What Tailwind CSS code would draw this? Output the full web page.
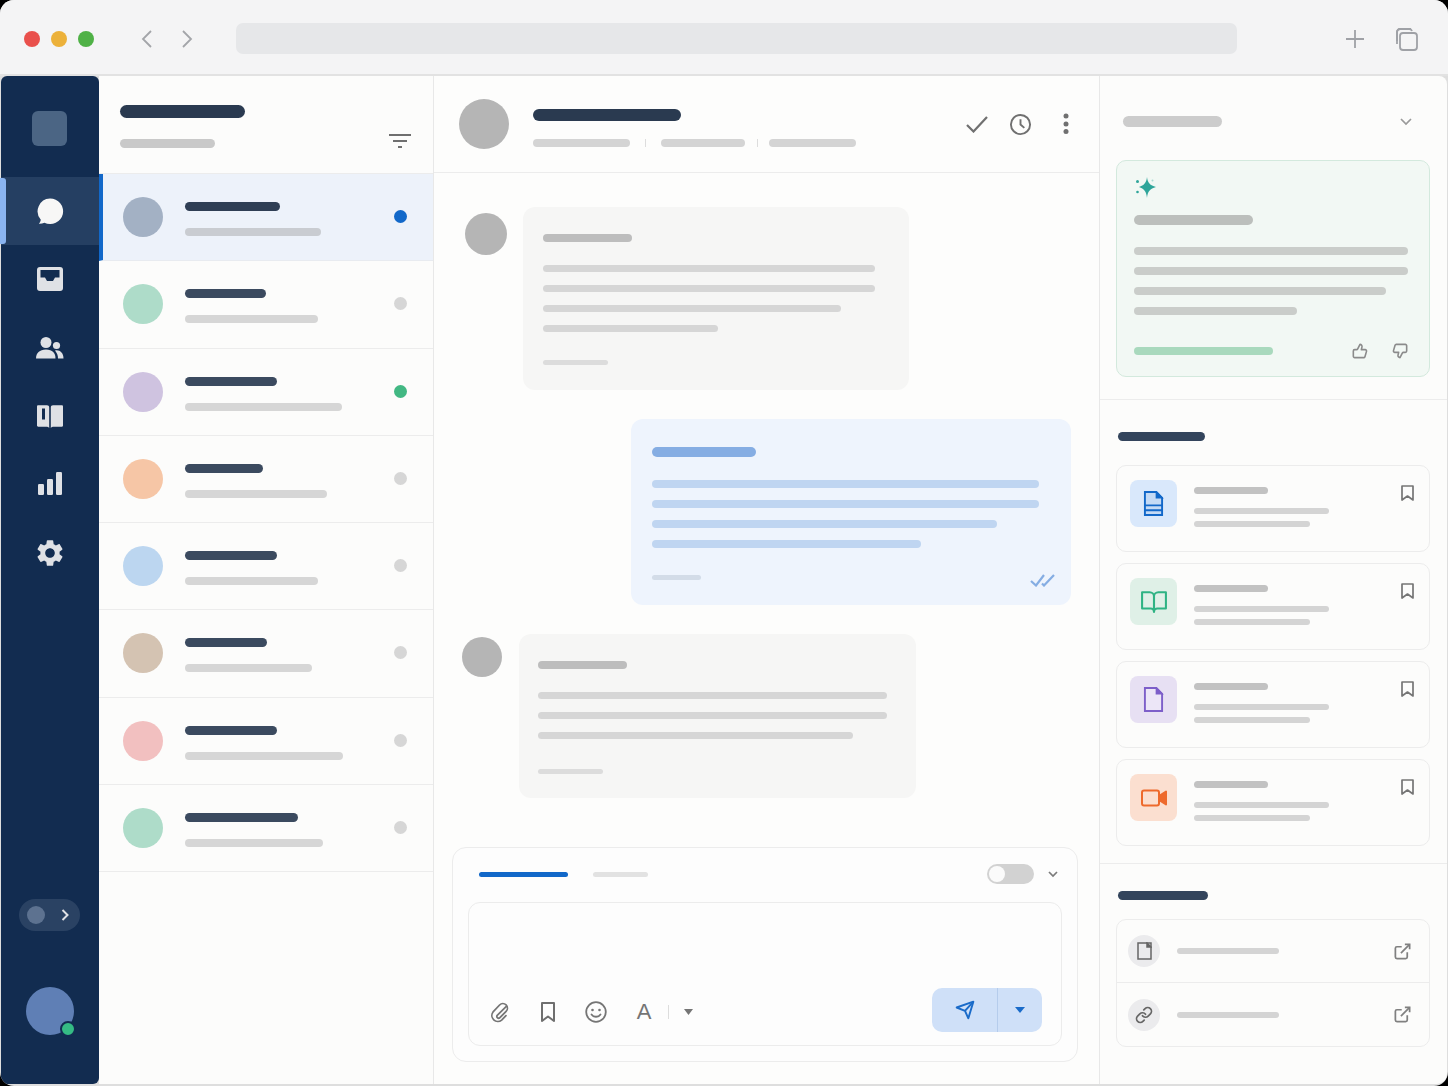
<!DOCTYPE html>
<html lang="en">
<head>
    <meta charset="UTF-8">
    <meta name="viewport" content="width=device-width, initial-scale=1.0">
    <title>Support Inbox</title>
    <script src="https://cdn.jsdelivr.net/npm/@tailwindcss/browser@4"></script>
</head>
<body class="bg-black">
<div class="w-[1448px] h-[1086px] overflow-hidden rounded-[14px] bg-[#dedede] font-['Inter',sans-serif]">

    <!-- Browser bar -->
    <div class="flex h-[76px] items-center border-b-2 border-[#e2e2e2] bg-[#f4f4f5] pl-6 pt-[3px]">
        <div class="flex gap-[11px]">
            <span class="size-4 rounded-full bg-[#e9504c]"></span>
            <span class="size-4 rounded-full bg-[#ecb13a]"></span>
            <span class="size-4 rounded-full bg-[#4fb146]"></span>
        </div>
        <svg class="ml-[46px] h-[18px] w-[14px]" viewBox="0 0 14 18" fill="none" stroke="#a3a5a9" stroke-width="1.8"><path d="M11 1 3 9l8 8"/></svg>
        <svg class="ml-[26px] h-[18px] w-[14px]" viewBox="0 0 14 18" fill="none" stroke="#a3a5a9" stroke-width="1.8"><path d="m3 1 8 8-8 8"/></svg>
        <div class="ml-[42px] h-[31px] w-[1001px] rounded-[7px] bg-[#e6e7e9]"></div>
        <svg class="ml-[108px] size-5" viewBox="0 0 20 20" fill="none" stroke="#9fa1a6" stroke-width="1.8"><path d="M10 1v18M1 10h18"/></svg>
        <svg class="ml-[29px] size-6" viewBox="0 0 24 24" fill="none" stroke="#9fa1a6" stroke-width="1.8"><path d="M3 17V5a3 3 0 0 1 3-3h11"/><path d="M3 14V5a3 3 0 0 1 3-3h9a3 3 0 0 1 3 2"/><rect x="6" y="6" width="17" height="17" rx="3"/></svg>
    </div>

    <div class="flex h-[1008px] pl-px pr-px">

        <!-- Nav rail -->
        <nav class="relative flex w-[98px] flex-col items-center rounded-t-[6px] rounded-b-[6px] bg-[#122c50]">
            <div class="mr-[2px] mt-[35px] size-[35px] rounded-[6px] bg-[#4b6584]"></div>
            <div class="mt-[31px] flex h-[68px] w-full items-center justify-center bg-[#253f62]">
                <svg class="size-7" viewBox="0 0 28 28" fill="#f7f7f6"><path d="M14 1.500a13 12.800 0 1 1-5.600 24.300c-1.700.7-3.700 1-5.600 .9 1-1 1.800-2.500 2-4A12.800 12.800 0 0 1 14 1.500Z"/></svg>
            </div>
            <span class="absolute left-[-1px] top-[102px] h-[66px] w-[6px] rounded-r-[3px] bg-[#8ab4f0]"></span>
            <div class="flex h-[68.400px] w-full items-center justify-center">
                <svg class="size-[26px]" viewBox="0 0 26 26"><rect x="0" y="1" width="26" height="24" rx="3" fill="#dfe1e5"/><path d="M3.500 4h19v7.500H18L16 15h-6l-2-3.500H3.500Z" fill="#122c50"/></svg>
            </div>
            <div class="flex h-[68.400px] w-full items-center justify-center">
                <svg class="size-7" viewBox="0 0 28 28" fill="#dfe1e5"><circle cx="10" cy="8.500" r="5.500"/><path d="M0 24.500c0-5.500 3.500-9 10-9s9.500 3.500 9.500 9Z"/><circle cx="20.500" cy="11.500" r="3.600"/><path d="M19 16.500c4.500-1 8.500 2 8.500 8h-5.500c0-3-1-5.500-3-8Z"/></svg>
            </div>
            <div class="flex h-[68.400px] w-full items-center justify-center">
                <svg class="size-7" viewBox="0 0 28 28"><path d="M1 4.500c0-.8.5-1.200 1.200-1.200H11c1.300 0 2.200.9 2.200 2.200V26c-.6-.8-1.400-1.200-2.300-1.200H2.200C1.500 24.800 1 24.400 1 23.600Z" fill="#dfe1e5"/><path d="M27 4.500c0-.8-.5-1.200-1.200-1.200H17c-1.300 0-2.200.9-2.200 2.200V26c.6-.8 1.400-1.200 2.300-1.200h8.700c.7 0 1.200-.4 1.200-1.200Z" fill="#dfe1e5"/><rect x="6" y="6.500" width="3" height="11" fill="#122c50"/></svg>
            </div>
            <div class="flex h-[68.400px] w-full items-center justify-center">
                <svg class="size-7" viewBox="0 0 28 28" fill="#dfe1e5"><rect x="2" y="14" width="6" height="11" rx="1.200"/><rect x="11" y="9" width="6" height="16" rx="1.200"/><rect x="20" y="2" width="6" height="23" rx="1.200"/></svg>
            </div>
            <div class="flex h-[68.400px] w-full items-center justify-center">
                <svg class="size-[32px]" viewBox="0 0 24 24" fill="#dfe1e5"><path d="M19.140 12.940c.04-.3.06-.61.06-.94 0-.32-.02-.64-.07-.94l2.030-1.580c.18-.14.23-.41.12-.61l-1.920-3.320c-.12-.22-.37-.29-.59-.22l-2.390.96c-.5-.38-1.030-.7-1.620-.94l-.36-2.540c-.04-.24-.24-.41-.48-.41h-3.840c-.24 0-.43.17-.47.41l-.36 2.540c-.59.24-1.130.57-1.620.94l-2.390-.96c-.22-.08-.47 0-.59.22L2.740 8.870c-.12.21-.08.47.12.61l2.030 1.580c-.05.3-.09.63-.09.94s.02.64.07.94l-2.030 1.580c-.18.14-.23.41-.12.61l1.920 3.320c.12.22.37.29.59.22l2.390-.96c.5.38 1.030.7 1.620.94l.36 2.540c.05.24.24.41.48.41h3.840c.24 0 .44-.17.47-.41l.36-2.540c.59-.24 1.130-.56 1.620-.94l2.390.96c.22.08.47 0 .59-.22l1.920-3.320c.12-.22.07-.47-.12-.61l-2.010-1.580zM12 15.600c-1.980 0-3.600-1.620-3.600-3.600s1.620-3.600 3.600-3.600 3.600 1.620 3.600 3.600-1.620 3.600-3.600 3.600z"/></svg>
            </div>
            <div class="mr-[2px] mt-auto flex h-8 w-[61px] items-center justify-between rounded-full bg-[#2a4263] pl-2 pr-[11px]">
                <span class="size-[18px] rounded-full bg-[#5d7290]"></span>
                <svg class="h-3 w-2" viewBox="0 0 8 12" fill="none" stroke="#dfe1e5" stroke-width="2"><path d="m1.500 1 5 5-5 5"/></svg>
            </div>
            <div class="relative mb-[49px] mt-[56px] size-12 rounded-full bg-[#5f7fb5]">
                <span class="absolute bottom-[-2px] right-[-2px] size-[16px] rounded-full border-[2px] border-[#122c50] bg-[#35bb84]"></span>
            </div>
        </nav>

        <!-- Conversation list -->
        <section class="flex w-[335px] flex-col border-r border-[#e8e8e8] bg-[#fcfcfb]">
            <div class="flex h-[98px] shrink-0 items-end justify-between border-b border-[#ececec] pl-[21px] pr-[22px]">
                <div class="self-start pt-[29px]">
                    <div class="h-[13px] w-[125px] rounded-full bg-[#2a3a50]"></div>
                    <div class="mt-[21px] h-[9px] w-[95px] rounded-full bg-[#c9c9c9]"></div>
                </div>
                <svg class="mb-[24px] h-4 w-[22px]" viewBox="0 0 22 16" fill="none" stroke="#6f6f6f" stroke-width="1.800"><path d="M0 2h22M4 8h14M9 14h4"/></svg>
            </div>

            <div class="flex h-[87.300px] items-start border-b border-l-4 border-b-[#e8ebf0] border-l-[#1268c9] bg-[#edf2fa] pl-5 pr-[26px] pt-[23px]">
                <span class="size-10 shrink-0 rounded-full bg-[#a3b1c4]"></span>
                <div class="ml-[22px] flex-1 pt-[5px]"><div class="h-[9px] w-[95px] rounded-full bg-[#2f3e54]"></div><div class="mt-[17px] h-2 w-[136px] rounded-full bg-[#c9ccd1]"></div></div>
                <span class="mt-[13px] size-[13px] rounded-full bg-[#1268c9]"></span>
            </div>
            <div class="flex h-[87.300px] items-start border-b border-[#ececec] pl-6 pr-[26px] pt-[23px]">
                <span class="size-10 shrink-0 rounded-full bg-[#aedcc9]"></span>
                <div class="ml-[22px] flex-1 pt-[5px]"><div class="h-[9px] w-[81px] rounded-full bg-[#3b4a5f]"></div><div class="mt-[17px] h-2 w-[133px] rounded-full bg-[#d6d6d6]"></div></div>
                <span class="mt-[13px] size-[13px] rounded-full bg-[#d6d6d6]"></span>
            </div>
            <div class="flex h-[87.300px] items-start border-b border-[#ececec] pl-6 pr-[26px] pt-[23px]">
                <span class="size-10 shrink-0 rounded-full bg-[#cfc3e0]"></span>
                <div class="ml-[22px] flex-1 pt-[5px]"><div class="h-[9px] w-[92px] rounded-full bg-[#3b4a5f]"></div><div class="mt-[17px] h-2 w-[157px] rounded-full bg-[#d6d6d6]"></div></div>
                <span class="mt-[13px] size-[13px] rounded-full bg-[#42b883]"></span>
            </div>
            <div class="flex h-[87.300px] items-start border-b border-[#ececec] pl-6 pr-[26px] pt-[23px]">
                <span class="size-10 shrink-0 rounded-full bg-[#f6c6a6]"></span>
                <div class="ml-[22px] flex-1 pt-[5px]"><div class="h-[9px] w-[78px] rounded-full bg-[#3b4a5f]"></div><div class="mt-[17px] h-2 w-[142px] rounded-full bg-[#d6d6d6]"></div></div>
                <span class="mt-[13px] size-[13px] rounded-full bg-[#d6d6d6]"></span>
            </div>
            <div class="flex h-[87.300px] items-start border-b border-[#ececec] pl-6 pr-[26px] pt-[23px]">
                <span class="size-10 shrink-0 rounded-full bg-[#bcd6f0]"></span>
                <div class="ml-[22px] flex-1 pt-[5px]"><div class="h-[9px] w-[92px] rounded-full bg-[#3b4a5f]"></div><div class="mt-[17px] h-2 w-[133px] rounded-full bg-[#d6d6d6]"></div></div>
                <span class="mt-[13px] size-[13px] rounded-full bg-[#d6d6d6]"></span>
            </div>
            <div class="flex h-[87.300px] items-start border-b border-[#ececec] pl-6 pr-[26px] pt-[23px]">
                <span class="size-10 shrink-0 rounded-full bg-[#d4c3b2]"></span>
                <div class="ml-[22px] flex-1 pt-[5px]"><div class="h-[9px] w-[82px] rounded-full bg-[#3b4a5f]"></div><div class="mt-[17px] h-2 w-[127px] rounded-full bg-[#d6d6d6]"></div></div>
                <span class="mt-[13px] size-[13px] rounded-full bg-[#d6d6d6]"></span>
            </div>
            <div class="flex h-[87.300px] items-start border-b border-[#ececec] pl-6 pr-[26px] pt-[23px]">
                <span class="size-10 shrink-0 rounded-full bg-[#f2c0c0]"></span>
                <div class="ml-[22px] flex-1 pt-[5px]"><div class="h-[9px] w-[92px] rounded-full bg-[#3b4a5f]"></div><div class="mt-[17px] h-2 w-[158px] rounded-full bg-[#d6d6d6]"></div></div>
                <span class="mt-[13px] size-[13px] rounded-full bg-[#d6d6d6]"></span>
            </div>
            <div class="flex h-[87.300px] items-start border-b border-[#ececec] pl-6 pr-[26px] pt-[23px]">
                <span class="size-10 shrink-0 rounded-full bg-[#aedcc9]"></span>
                <div class="ml-[22px] flex-1 pt-[5px]"><div class="h-[9px] w-[113px] rounded-full bg-[#3b4a5f]"></div><div class="mt-[17px] h-2 w-[138px] rounded-full bg-[#d6d6d6]"></div></div>
                <span class="mt-[13px] size-[13px] rounded-full bg-[#d6d6d6]"></span>
            </div>
        </section>

        <!-- Chat -->
        <main class="flex w-[666px] flex-col border-r border-[#e8e8e8] bg-[#fdfdfc]">
            <header class="flex h-[97px] shrink-0 items-center border-b border-[#ececec] pl-[25px] pr-[30px]">
                <span class="size-[50px] rounded-full bg-[#b5b5b5]"></span>
                <div class="ml-[24px] flex-1 pt-[7px]">
                    <div class="h-3 w-[148px] rounded-full bg-[#2a3a50]"></div>
                    <div class="mt-[18px] flex items-center">
                        <div class="h-2 w-[97px] rounded-full bg-[#d4d4d4]"></div>
                        <div class="ml-[15px] h-2 w-px bg-[#dddddd]"></div>
                        <div class="ml-[15px] h-2 w-[84px] rounded-full bg-[#d4d4d4]"></div>
                        <div class="ml-[12px] h-2 w-px bg-[#dddddd]"></div>
                        <div class="ml-[11px] h-2 w-[87px] rounded-full bg-[#d4d4d4]"></div>
                    </div>
                </div>
                <svg class="h-[18px] w-[22px]" viewBox="0 0 22 18" fill="none" stroke="#707070" stroke-width="2.200"><path d="m1 10 6.500 6.500L21 2"/></svg>
                <svg class="ml-[21px] size-[23px]" viewBox="0 0 24 24" fill="none" stroke="#707070" stroke-width="2"><circle cx="12" cy="12" r="10"/><path d="M12 6.500V12l4 3.500"/></svg>
                <svg class="ml-[31px] h-[22px] w-[6px]" viewBox="0 0 6 22" fill="#707070"><circle cx="3" cy="3" r="2.500"/><circle cx="3" cy="11" r="2.500"/><circle cx="3" cy="18.500" r="2.500"/></svg>
            </header>

            <div class="flex flex-1 flex-col pt-[34px]">
                <div class="flex items-start pl-[31px]">
                    <span class="mt-[6px] size-[42px] rounded-full bg-[#b5b5b5]"></span>
                    <div class="ml-[16px] h-[183px] w-[386px] rounded-[12px] bg-[#f6f6f5] pl-5 pt-[27px]">
                        <div class="h-2 w-[89px] rounded-full bg-[#bdbdbd]"></div>
                        <div class="mt-[23px] flex flex-col gap-[13px]">
                            <div class="h-[7px] w-[332px] rounded-full bg-[#d6d6d6]"></div>
                            <div class="h-[7px] w-[332px] rounded-full bg-[#d6d6d6]"></div>
                            <div class="h-[7px] w-[298px] rounded-full bg-[#d6d6d6]"></div>
                            <div class="h-[7px] w-[175px] rounded-full bg-[#d6d6d6]"></div>
                        </div>
                        <div class="mt-[28px] h-[5px] w-[65px] rounded-full bg-[#dcdcdc]"></div>
                    </div>
                </div>

                <div class="mr-[28px] mt-[29px] h-[186px] w-[440px] self-end rounded-[12px] bg-[#eef4fd] pl-[21px] pt-[28px]">
                    <div class="h-[10px] w-[104px] rounded-full bg-[#85ade3]"></div>
                    <div class="mt-[23px] flex flex-col gap-3">
                        <div class="h-2 w-[387px] rounded-full bg-[#bfd5f1]"></div>
                        <div class="h-2 w-[387px] rounded-full bg-[#bfd5f1]"></div>
                        <div class="h-2 w-[345px] rounded-full bg-[#bfd5f1]"></div>
                        <div class="h-2 w-[269px] rounded-full bg-[#bfd5f1]"></div>
                    </div>
                    <div class="mt-[27px] flex items-start justify-between pr-[16px]">
                        <div class="h-[5px] w-[49px] rounded-full bg-[#d3dce8]"></div>
                        <svg class="mt-[-2px] h-[14px] w-[25px]" viewBox="0 0 25 14" fill="none" stroke="#85ade3" stroke-width="2.200"><path d="m1 8 5 4.500L14 2"/><path d="m12 10.500 2 2L24 2"/></svg>
                    </div>
                </div>

                <div class="mt-[29px] flex items-start pl-[28px]">
                    <span class="mt-[3px] size-10 rounded-full bg-[#b5b5b5]"></span>
                    <div class="ml-[17px] h-[164px] w-[397px] rounded-[12px] bg-[#f6f6f5] pl-[19px] pt-[27px]">
                        <div class="h-2 w-[89px] rounded-full bg-[#bdbdbd]"></div>
                        <div class="mt-[23px] flex flex-col gap-[13px]">
                            <div class="h-[7px] w-[349px] rounded-full bg-[#d6d6d6]"></div>
                            <div class="h-[7px] w-[349px] rounded-full bg-[#d6d6d6]"></div>
                            <div class="h-[7px] w-[315px] rounded-full bg-[#d6d6d6]"></div>
                        </div>
                        <div class="mt-[30px] h-[5px] w-[65px] rounded-full bg-[#dcdcdc]"></div>
                    </div>
                </div>

                <!-- Composer -->
                <div class="mb-[22px] ml-[18px] mr-[21px] mt-auto h-[215px] rounded-[14px] border border-[#ececec] bg-[#fdfdfd]">
                    <div class="mt-[16px] flex h-5 items-center pl-[26px] pr-[19px]">
                        <div class="h-[5px] w-[89px] rounded-full bg-[#1268c9]"></div>
                        <div class="ml-[25px] h-[5px] w-[55px] rounded-full bg-[#e2e2e2]"></div>
                        <div class="ml-auto flex h-5 w-[47px] items-center rounded-full bg-[#d2d2d2] pl-[2px]">
                            <span class="size-4 rounded-full bg-[#fbfbfb]"></span>
                        </div>
                        <svg class="ml-[14px] h-[7px] w-[10px]" viewBox="0 0 10 7" fill="none" stroke="#7b7b7b" stroke-width="1.700"><path d="m1 1 4 4 4-4"/></svg>
                    </div>
                    <div class="mx-[15px] mt-[18px] flex h-[144px] items-end rounded-[12px] border border-[#ececec] pb-[13px] pl-[7px] pr-[19px]">
                        <div class="flex h-[44px] flex-1 items-center pt-[4px]">
                            <div class="flex w-[48px] justify-center">
                                <svg class="size-[22px]" viewBox="0 0 24 24" fill="none" stroke="#757575" stroke-width="1.900" stroke-linecap="round" stroke-linejoin="round"><path d="m18 5-8.500 11a2 2 0 0 0 3 2.500l6-8a5 5 0 0 0-8-6l-6 8.500a6.500 6.500 0 0 0 10.500 7.500l4-5.500" transform="rotate(8 12 12)"/></svg>
                            </div>
                            <div class="flex w-[48px] justify-center">
                                <svg class="h-5 w-[16px]" viewBox="0 0 16 20" fill="none" stroke="#6f6f6f" stroke-width="2" stroke-linejoin="round"><path d="M2 1h12v18l-6-4.500L2 19Z"/></svg>
                            </div>
                            <div class="flex w-[48px] justify-center">
                                <svg class="size-[22px]" viewBox="0 0 22 22" fill="none" stroke="#757575" stroke-width="1.800"><circle cx="11" cy="11" r="9.800"/><circle cx="7.500" cy="9" r="1.300" fill="#757575" stroke="none"/><circle cx="14.500" cy="9" r="1.300" fill="#757575" stroke="none"/><path d="M6.500 13.500c2 3 7 3 9 0" stroke-linecap="round"/></svg>
                            </div>
                            <span class="flex w-[48px] justify-center font-['Liberation_Sans',sans-serif] text-[22px] leading-none text-[#757575]">A</span>
                            <span class="h-[14px] w-px bg-[#dddddd]"></span>
                            <svg class="ml-[15px] h-[6px] w-[9px]" viewBox="0 0 9 6" fill="#757575"><path d="M0 0h9L4.500 6Z"/></svg>
                        </div>
                        <div class="flex h-[44px] w-[110px] items-center rounded-[10px] bg-[#cfe0f8]">
                            <div class="flex h-full w-[66px] items-center justify-center border-r border-[#b5ccec]">
                                <svg class="size-[20px]" viewBox="0 0 24 24" fill="none" stroke="#1a6bc9" stroke-width="2.300" stroke-linejoin="round"><path d="m22 2-6 20-4-9-10-4Z"/><path d="M22 2 12 13"/></svg>
                            </div>
                            <svg class="ml-[17px] h-[6px] w-[10px]" viewBox="0 0 10 6" fill="#1a6bc9"><path d="M0 0h10L5 6Z"/></svg>
                        </div>
                    </div>
                </div>
            </div>
        </main>

        <!-- Right panel -->
        <aside class="flex flex-1 flex-col rounded-tr-[8px] rounded-br-[10px] bg-[#fcfcfb]">
            <div class="h-[324px] shrink-0 border-b border-[#ececec] px-4">
                <div class="flex items-center justify-between pl-[7px] pr-[19px] pt-[40px]">
                    <div class="h-[11px] w-[99px] rounded-full bg-[#cccccc]"></div>
                    <svg class="h-[8px] w-[12px]" viewBox="0 0 12 8" fill="none" stroke="#9a9a9a" stroke-width="1.700"><path d="m1 1 5 5 5-5"/></svg>
                </div>
                <div class="mt-[33px] h-[217px] w-[314px] rounded-[10px] border border-[#d3e9dd] bg-[#f2f8f4] pl-[17px] pt-[16px]">
                    <svg class="ml-[1px] size-[22px]" viewBox="0 0 22 22" fill="#2ea59a"><path d="M12 0c.6 5.500 3 8.500 9 10-6 1.500-8.400 4.500-9 11-.6-6.500-3-9.500-8-11 5-1.500 7.400-4.500 8-10Z"/><circle cx="2.500" cy="4.500" r="1.500"/><circle cx="2.500" cy="15" r="1.300"/><circle cx="17.500" cy="3.500" r="1" fill="#a9dcd4"/></svg>
                    <div class="mt-[16px] h-[10px] w-[119px] rounded-full bg-[#bcbfbc]"></div>
                    <div class="mt-[22px] flex flex-col gap-3">
                        <div class="h-2 w-[274px] rounded-full bg-[#cacdca]"></div>
                        <div class="h-2 w-[274px] rounded-full bg-[#cacdca]"></div>
                        <div class="h-2 w-[252px] rounded-full bg-[#cacdca]"></div>
                        <div class="h-2 w-[163px] rounded-full bg-[#cacdca]"></div>
                    </div>
                    <div class="mt-[28px] flex items-center pr-[21px]">
                        <div class="h-2 w-[139px] rounded-full bg-[#a9d9bd]"></div>
                        <svg class="ml-auto size-[16px]" viewBox="0 0 24 24" fill="none" stroke="#8b8b8b" stroke-width="2.400" stroke-linejoin="round"><path d="M15 5.880 14 10h5.830a2 2 0 0 1 1.920 2.560l-2.330 8A2 2 0 0 1 17.500 22H4a2 2 0 0 1-2-2v-8a2 2 0 0 1 2-2h2.760a2 2 0 0 0 1.790-1.110L12 2a3.130 3.130 0 0 1 3 3.880Z"/></svg>
                        <svg class="ml-[24px] size-[16px] rotate-180" viewBox="0 0 24 24" fill="none" stroke="#8b8b8b" stroke-width="2.400" stroke-linejoin="round"><path d="M15 5.880 14 10h5.830a2 2 0 0 1 1.920 2.560l-2.330 8A2 2 0 0 1 17.500 22H4a2 2 0 0 1-2-2v-8a2 2 0 0 1 2-2h2.760a2 2 0 0 0 1.790-1.110L12 2a3.130 3.130 0 0 1 3 3.880Z"/></svg>
                    </div>
                </div>
            </div>

            <div class="h-[464px] shrink-0 border-b border-[#ececec] px-4 pt-[32px]">
                <div class="ml-[2px] h-[9px] w-[87px] rounded-full bg-[#33445c]"></div>
                <div class="mt-[24px] flex flex-col gap-[11.600px]">
                    <div class="flex h-[86.500px] w-[314px] items-start rounded-[10px] border border-[#ececec] pl-[13px] pr-[15px] pt-[14px]">
                        <div class="flex size-[47px] shrink-0 items-center justify-center rounded-[8px] bg-[#d9e8fb]">
                            <svg class="h-[25px] w-[21px]" viewBox="0 0 22 26"><path d="M2 1h12l6 6v18H2Z" fill="#c4daf5" stroke="#1268c9" stroke-width="2"/><path d="M14 1v6h6Z" fill="#1268c9" stroke="#1268c9" stroke-width="1.500"/><path d="M2 15h18M2 20h18" stroke="#1268c9" stroke-width="2"/></svg>
                        </div>
                        <div class="ml-[17px] flex-1 pt-[7px]"><div class="h-[7px] w-[74px] rounded-full bg-[#c2c2c2]"></div><div class="mt-[14px] h-[6px] w-[135px] rounded-full bg-[#d4d4d4]"></div><div class="mt-[7px] h-[6px] w-[116px] rounded-full bg-[#d4d4d4]"></div></div>
                        <svg class="mt-[5px] h-4 w-[13px]" viewBox="0 0 13 16" fill="none" stroke="#757575" stroke-width="1.700" stroke-linejoin="round"><path d="M1 1h11v14l-5.500-4L1 15Z"/></svg>
                    </div>
                    <div class="flex h-[86.500px] w-[314px] items-start rounded-[10px] border border-[#ececec] pl-[13px] pr-[15px] pt-[14px]">
                        <div class="flex size-[47px] shrink-0 items-center justify-center rounded-[8px] bg-[#dff0e7]">
                            <svg class="size-[26px]" viewBox="0 0 24 24" fill="none" stroke="#2fb384" stroke-width="1.900" stroke-linejoin="round"><path d="M1 3h7a4 4 0 0 1 4 4v14a3 3 0 0 0-3-3H1z"/><path d="M23 3h-7a4 4 0 0 0-4 4v14a3 3 0 0 1 3-3h8z"/></svg>
                        </div>
                        <div class="ml-[17px] flex-1 pt-[7px]"><div class="h-[7px] w-[74px] rounded-full bg-[#c2c2c2]"></div><div class="mt-[14px] h-[6px] w-[135px] rounded-full bg-[#d4d4d4]"></div><div class="mt-[7px] h-[6px] w-[116px] rounded-full bg-[#d4d4d4]"></div></div>
                        <svg class="mt-[5px] h-4 w-[13px]" viewBox="0 0 13 16" fill="none" stroke="#757575" stroke-width="1.700" stroke-linejoin="round"><path d="M1 1h11v14l-5.500-4L1 15Z"/></svg>
                    </div>
                    <div class="flex h-[86.500px] w-[314px] items-start rounded-[10px] border border-[#ececec] pl-[13px] pr-[15px] pt-[14px]">
                        <div class="flex size-[47px] shrink-0 items-center justify-center rounded-[8px] bg-[#e7e0f3]">
                            <svg class="h-[25px] w-[21px]" viewBox="0 0 22 26"><path d="M2 1h12l6 6v18H2Z" fill="#ece6f7" stroke="#7d5fc9" stroke-width="2"/><path d="M14 1v6h6Z" fill="#7d5fc9" stroke="#7d5fc9" stroke-width="1.500"/></svg>
                        </div>
                        <div class="ml-[17px] flex-1 pt-[7px]"><div class="h-[7px] w-[74px] rounded-full bg-[#c2c2c2]"></div><div class="mt-[14px] h-[6px] w-[135px] rounded-full bg-[#d4d4d4]"></div><div class="mt-[7px] h-[6px] w-[116px] rounded-full bg-[#d4d4d4]"></div></div>
                        <svg class="mt-[5px] h-4 w-[13px]" viewBox="0 0 13 16" fill="none" stroke="#757575" stroke-width="1.700" stroke-linejoin="round"><path d="M1 1h11v14l-5.500-4L1 15Z"/></svg>
                    </div>
                    <div class="flex h-[86.500px] w-[314px] items-start rounded-[10px] border border-[#ececec] pl-[13px] pr-[15px] pt-[14px]">
                        <div class="flex size-[47px] shrink-0 items-center justify-center rounded-[8px] bg-[#fbdfd0]">
                            <svg class="h-[18px] w-[26px]" viewBox="0 0 26 18" fill="none" stroke="#ee6a2c" stroke-width="2" stroke-linejoin="round"><rect x="1" y="1.500" width="17" height="15" rx="2"/><path d="m18 7 7-4.500v13L18 11" fill="#ee6a2c"/></svg>
                        </div>
                        <div class="ml-[17px] flex-1 pt-[7px]"><div class="h-[7px] w-[74px] rounded-full bg-[#c2c2c2]"></div><div class="mt-[14px] h-[6px] w-[135px] rounded-full bg-[#d4d4d4]"></div><div class="mt-[7px] h-[6px] w-[116px] rounded-full bg-[#d4d4d4]"></div></div>
                        <svg class="mt-[5px] h-4 w-[13px]" viewBox="0 0 13 16" fill="none" stroke="#757575" stroke-width="1.700" stroke-linejoin="round"><path d="M1 1h11v14l-5.500-4L1 15Z"/></svg>
                    </div>
                </div>
            </div>

            <div class="px-4 pt-[27px]">
                <div class="ml-[2px] h-[9px] w-[90px] rounded-full bg-[#33445c]"></div>
                <div class="mt-[19px] w-[314px] rounded-[10px] border border-[#ececec]">
                    <div class="flex h-[63px] items-center border-b border-[#ececec] pl-[11px] pr-[17px]">
                        <span class="flex size-8 items-center justify-center rounded-full bg-[#ebebed]">
                            <svg class="h-[18px] w-[15px]" viewBox="0 0 15 18" fill="none" stroke="#666666" stroke-width="1.500"><path d="M1 1h13v16H1Z"/><path d="M10 1v4h4Z" fill="#666666"/></svg>
                        </span>
                        <div class="ml-[17px] h-[6px] w-[102px] rounded-full bg-[#d4d4d4]"></div>
                        <svg class="ml-auto size-[19px]" viewBox="0 0 24 24" fill="none" stroke="#808080" stroke-width="2.200"><path d="M18 13v6a2 2 0 0 1-2 2H5a2 2 0 0 1-2-2V8a2 2 0 0 1 2-2h6"/><path d="M15 3h6v6"/><path d="M10 14 21 3"/></svg>
                    </div>
                    <div class="flex h-[63px] items-center pl-[11px] pr-[17px]">
                        <span class="flex size-8 items-center justify-center rounded-full bg-[#ebebed]">
                            <svg class="size-[18px]" viewBox="0 0 24 24" fill="none" stroke="#666666" stroke-width="2.300" stroke-linecap="round"><path d="M10 13a5 5 0 0 0 7.540.54l3-3a5 5 0 0 0-7.070-7.070l-1.720 1.710"/><path d="M14 11a5 5 0 0 0-7.540-.54l-3 3a5 5 0 0 0 7.070 7.070l1.710-1.710"/></svg>
                        </span>
                        <div class="ml-[17px] h-[6px] w-[102px] rounded-full bg-[#d4d4d4]"></div>
                        <svg class="ml-auto size-[19px]" viewBox="0 0 24 24" fill="none" stroke="#808080" stroke-width="2.200"><path d="M18 13v6a2 2 0 0 1-2 2H5a2 2 0 0 1-2-2V8a2 2 0 0 1 2-2h6"/><path d="M15 3h6v6"/><path d="M10 14 21 3"/></svg>
                    </div>
                </div>
            </div>
        </aside>
    </div>
</div>
</body>
</html>
